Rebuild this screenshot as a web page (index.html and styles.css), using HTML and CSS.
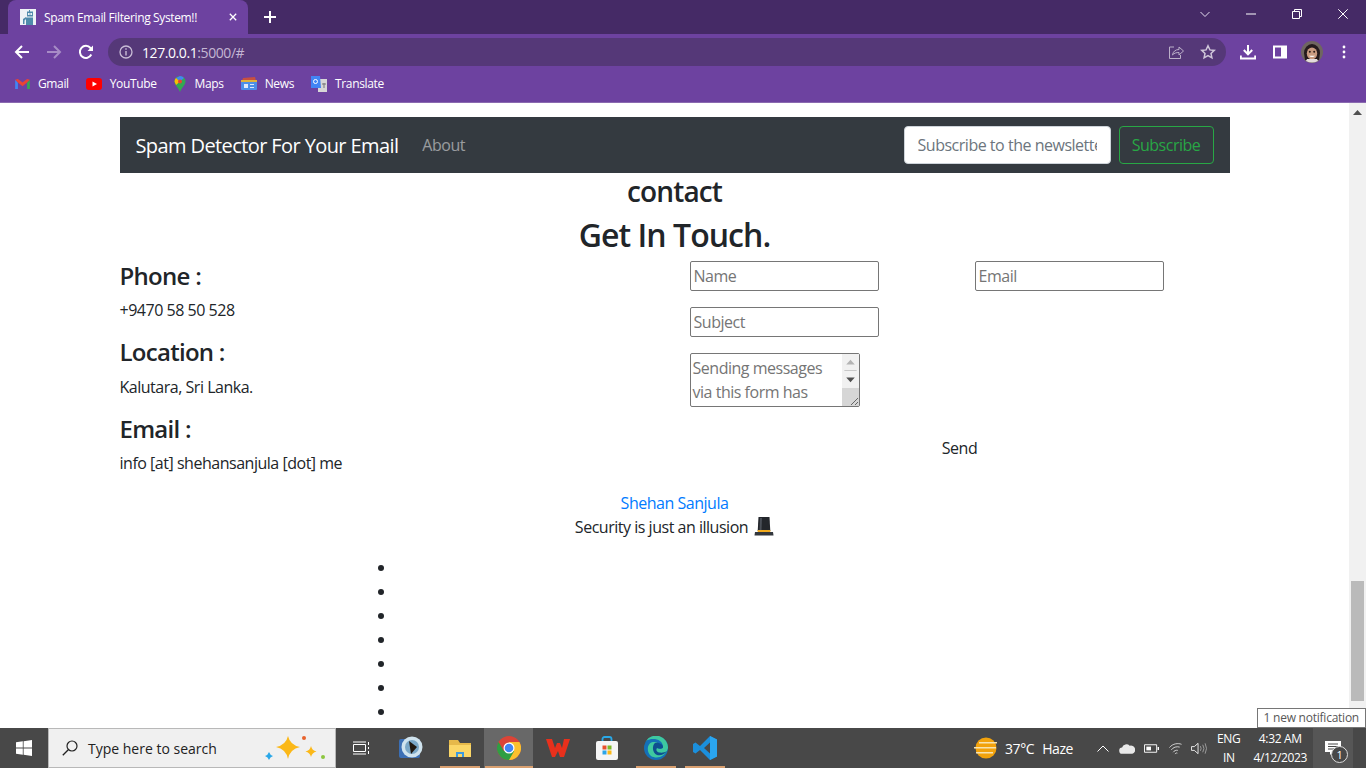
FILE: index.html
```html
<!DOCTYPE html>
<html>
<head>
    <title>Spam Email Filtering System!!</title>
    <link rel="stylesheet" href="styles.css">
</head>
<body>
<div class="screen">

    <div class="browser">
        <div class="tabstrip">
            <div class="tab">
                <svg class="favicon" viewBox="0 0 16 16"><rect width="16" height="16" fill="#eef3f6"/><path d="M7 2.500h6v5H7zM6 8.500h7V16H6zM3 10l3-2v2l-1.500 1.500V15H3zM9 1h1v2H9z" fill="#4f8bab"/><circle cx="8.800" cy="5" r="1" fill="#fff"/><circle cx="11.200" cy="5" r="1" fill="#fff"/></svg>
                <span class="tab-title">Spam Email Filtering System!!</span>
                <svg class="tab-close" viewBox="0 0 10 10"><path d="M1 1l8 8M9 1l-8 8" stroke="#fff" stroke-width="1.600"/></svg>
            </div>
            <svg class="new-tab" viewBox="0 0 12 12"><path d="M6 0v12M0 6h12" stroke="#fff" stroke-width="2"/></svg>
            <div class="window-btns">
                <svg viewBox="0 0 10 10" class="win-btn"><path d="M.5 3l4.500 4.500L9.500 3" fill="none" stroke="#e4dcee" stroke-width="1"/></svg>
                <svg viewBox="0 0 10 10" class="win-btn"><path d="M0 5h10" stroke="#fff" stroke-width="1"/></svg>
                <svg viewBox="0 0 10 10" class="win-btn"><path d="M2.500 2V.5h7v7H8M.5 2.500h7v7h-7z" fill="none" stroke="#fff" stroke-width="1"/></svg>
                <svg viewBox="0 0 10 10" class="win-btn"><path d="M.3 .3l9.400 9.400M9.700 .3L.3 9.700" stroke="#fff" stroke-width="1"/></svg>
            </div>
        </div>
        <div class="toolbar">
            <svg class="nav-icon" viewBox="0 0 16 16"><path d="M15 8H2M8 2L2 8l6 6" fill="none" stroke="#fff" stroke-width="2"/></svg>
            <svg class="nav-icon" viewBox="0 0 16 16"><path d="M1 8h13M8 2l6 6-6 6" fill="none" stroke="#a78cc6" stroke-width="2"/></svg>
            <svg class="nav-icon" viewBox="0 0 16 16"><path d="M13.300 10.500A6 6 0 1 1 12.500 4L14 5.500" fill="none" stroke="#fff" stroke-width="2"/><path d="M15 1.500V7H9.500z" fill="#fff"/></svg>
            <div class="omnibox">
                <svg class="info-icon" viewBox="0 0 14 14"><circle cx="7" cy="7" r="6" fill="none" stroke="#c9bdd6" stroke-width="1.300"/><path d="M7 6v4.500M7 3.300v1.500" stroke="#c9bdd6" stroke-width="1.400"/></svg>
                <span class="url">127.0.0.1<span class="url-rest">:5000/#</span></span>
                <svg class="share-icon" viewBox="0 0 16 16"><path d="M6 3H1.500v11.500h11V11" fill="none" stroke="#bcb0c9" stroke-width="1"/><path d="M4.500 11c.5-3.500 3-5.500 6.500-5.500V3l4.500 4-4.500 4V8.500c-2.500 0-5 .5-6.500 2.500z" fill="none" stroke="#bcb0c9" stroke-width="1"/></svg>
                <svg class="star-icon" viewBox="0 0 16 16"><path d="M8 1.800l1.900 4.100 4.400.5-3.300 3 .9 4.400L8 11.600l-3.900 2.200.9-4.400-3.300-3 4.400-.5z" fill="none" stroke="#cfc6d9" stroke-width="1.500"/></svg>
            </div>
            <svg class="download-icon" viewBox="0 0 16 16"><path d="M8 1v9M3.800 6L8 10.300 12.200 6M.8 11.500v3h14.400v-3" fill="none" stroke="#fff" stroke-width="2"/></svg>
            <svg class="panel-icon" viewBox="0 0 14 14"><path d="M0 .5h14v13H0z" fill="#fff"/><path d="M2 2.500h6v9H2z" fill="#6d42a0"/></svg>
            <svg class="avatar" viewBox="0 0 22 22"><circle cx="11" cy="11" r="11" fill="#6f6660"/><path d="M3 12a8 9 0 0 1 16 0l-1 7H4z" fill="#241a1d"/><ellipse cx="11" cy="12.500" rx="5.200" ry="6" fill="#c99b80"/><path d="M5 20q6 3 12 0l-1-2H6z" fill="#e4dcdc"/><path d="M7.800 14.800q3.200 2.600 6.400 0z" fill="#fff"/><circle cx="8.800" cy="10.800" r="1" fill="#2a1c18"/><circle cx="13.200" cy="10.800" r="1" fill="#2a1c18"/></svg>
            <svg class="dots" viewBox="0 0 4 14"><circle cx="2" cy="2" r="1.400" fill="#fff"/><circle cx="2" cy="7" r="1.400" fill="#fff"/><circle cx="2" cy="12" r="1.400" fill="#fff"/></svg>
        </div>
        <div class="bookmarks">
            <div class="bookmark">
                <svg viewBox="0 0 16 12" class="bm-gmail"><path d="M0 2v10h3V5z" fill="#4285f4"/><path d="M16 2v10h-3V5z" fill="#34a853"/><path d="M0 2l3-1 5 4 5-4 3 1-3 3-5 4-5-4z" fill="#ea4335"/></svg>
                <span>Gmail</span>
            </div>
            <div class="bookmark">
                <svg viewBox="0 0 16 12" class="bm-yt"><rect width="16" height="12" rx="3" fill="#f00"/><path d="M6.500 3.500L11 6 6.500 8.500z" fill="#fff"/></svg>
                <span>YouTube</span>
            </div>
            <div class="bookmark">
                <svg viewBox="0 0 12 16" class="bm-maps"><path d="M6 0a5.500 5.500 0 0 1 5.500 5.500C11.500 9 8 11 6 16 4 11 .5 9 .5 5.500A5.500 5.500 0 0 1 6 0z" fill="#34a853"/><path d="M2 2L6 0a5.500 5.500 0 0 1 4 2L6 5.500z" fill="#4285f4"/><path d="M.5 5.500A5.500 5.500 0 0 1 2 2l4 3.500L2 9z" fill="#fbbc04"/><circle cx="6" cy="5.500" r="2" fill="#ea4335"/></svg>
                <span>Maps</span>
            </div>
            <div class="bookmark">
                <svg viewBox="0 0 16 14" class="bm-news"><path d="M2 1l12-1 1 4H1z" fill="#c9503f"/><rect y="3" width="16" height="10" rx="1" fill="#4d8fe8"/><path d="M0 3h16v2H0z" fill="#e2b33a"/><path d="M3 7h4v4H3zM9 7h4v1H9zM9 10h4v1H9z" fill="#dfeaf8"/></svg>
                <span>News</span>
            </div>
            <div class="bookmark">
                <svg viewBox="0 0 16 16" class="bm-translate"><path d="M7 3h9v13H7z" fill="#d7d7d7"/><path d="M0 0h9l1 12H0z" fill="#4285f4"/><circle cx="4.500" cy="5.500" r="2" fill="none" stroke="#fff" stroke-width="1"/><path d="M11 8h4M13 7v5" stroke="#777" stroke-width="1"/></svg>
                <span>Translate</span>
            </div>
        </div>
    </div>

    <div class="viewport">
        <div class="page">
            <div class="container">
                <nav class="navbar">
                    <a class="brand">Spam Detector For Your Email</a>
                    <a class="nav-link">About</a>
                    <form class="subscribe">
                        <input class="subscribe-input" type="text" placeholder="Subscribe to the newsletter">
                        <button class="subscribe-btn" type="button">Subscribe</button>
                    </form>
                </nav>

                <h2 class="contact-title">contact</h2>
                <h1 class="contact-head">Get In Touch.</h1>

                <div class="contact-row">
                    <div class="contact-info">
                        <h3>Phone :</h3>
                        <p>+9470 58 50 528</p>
                        <h3>Location :</h3>
                        <p>Kalutara, Sri Lanka.</p>
                        <h3>Email :</h3>
                        <p>info [at] shehansanjula [dot] me</p>
                    </div>
                    <form class="contact-form">
                        <div class="form-grid">
                            <input type="text" placeholder="Name">
                            <input type="text" placeholder="Email">
                            <input type="text" placeholder="Subject">
                        </div>
                        <div class="message-box">
                            <textarea placeholder="Sending messages via this form has been disabled"></textarea>
                            <div class="message-scroll">
                                <svg viewBox="0 0 17 18" class="message-btn"><path d="M8.500 6L13 11H4z" fill="#b4b4b4"/><path d="M2 17.500h13" stroke="#c4c4c4" stroke-width="1"/></svg>
                                <svg viewBox="0 0 17 18" class="message-btn"><path d="M8.500 12L13 7H4z" fill="#505050"/></svg>
                                <div class="message-thumb">
                                    <svg viewBox="0 0 10 10" class="message-grip"><path d="M9 2L2 9M9 6L6 9" stroke="#666" stroke-width="1"/></svg>
                                </div>
                            </div>
                        </div>
                        <button class="send-btn" type="button">Send</button>
                    </form>
                </div>

                <footer class="credits">
                    <a class="credit-link">Shehan Sanjula</a>
                    <div class="credit-line">Security is just an illusion
                        <svg class="hat" viewBox="0 0 20 20"><path d="M4.500 0h11l.8 14H3.700z" fill="#23262b"/><path d="M6 1h2l-.5 12H5.500z" fill="#4a4f57"/><path d="M3.700 13h12.600v2H3.700z" fill="#f2aa1c"/><path d="M1 15h18l.5 3.500H.5z" fill="#33373d"/></svg>
                    </div>
                </footer>

                <ul class="empty-list">
                    <li></li><li></li><li></li><li></li><li></li><li></li><li></li><li></li>
                </ul>
            </div>
        </div>
        <div class="scrollbar">
            <svg class="sb-arrow" viewBox="0 0 9 5"><path d="M4.500 0L9 5H0z" fill="#505050"/></svg>
            <div class="sb-thumb"></div>
        </div>
    </div>

    <div class="taskbar">
        <div class="start">
            <svg viewBox="0 0 16 16" class="win-logo"><path d="M0 2.300l6.800-1v6.300H0zM7.600 1.200L16 0v7.600H7.600zM0 8.400h6.800v6.300l-6.800-1zM7.600 8.400H16V16l-8.400-1.200z" fill="#fff"/></svg>
        </div>
        <div class="search">
            <svg class="search-icon" viewBox="0 0 16 16"><circle cx="10" cy="6" r="5" fill="none" stroke="#222" stroke-width="1.200"/><path d="M6.300 9.700L.8 15.200" stroke="#222" stroke-width="1.300"/></svg>
            <span class="search-text">Type here to search</span>
            <svg class="sparkles" viewBox="0 0 62 28"><path d="M25 2q2 9 12 11-10 2-12 12-2-10-12-12 10-2 12-11z" fill="#fbb818"/><path d="M48 12q1 4.500 5.500 5.500-4.500 1-5.500 5.500-1-4.500-5.500-5.500 4.500-1 5.500-5.500z" fill="#fbb818"/><path d="M6 18q1 3 4 4-3 1-4 4-1-3-4-4 3-1 4-4z" fill="#29a7e8"/><circle cx="41" cy="4" r="2" fill="#e8622c"/><circle cx="60" cy="23" r="2" fill="#8cc63f"/></svg>
        </div>
        <div class="task task-first">
            <svg viewBox="0 0 17 14" class="taskview-icon"><path d="M.5 3.500h12v7H.5zM0 1h13M0 13h13M15.500 1v3M15.500 6v2M15.500 10v3" fill="none" stroke="#fff" stroke-width="1"/></svg>
        </div>
        <div class="task">
            <svg viewBox="0 0 24 24" class="task-icon"><rect y="3" width="21" height="19" rx="2" fill="#3b6fb5"/><circle cx="13" cy="11" r="10.500" fill="#cfe3ee"/><circle cx="13" cy="11" r="7" fill="#7aa7c7"/><path d="M10 5l8 6-6 7z" fill="#201810"/></svg>
        </div>
        <div class="task task-running">
            <svg viewBox="0 0 24 20" class="task-icon"><path d="M1 2h9l2 3h11v14H1z" fill="#e6b94a"/><path d="M1 7h22v12H1z" fill="#fbd767"/><path d="M8 14h8v5h-2v-3h-4v3H8z" fill="#3c9be0"/></svg>
        </div>
        <div class="task task-active">
            <svg viewBox="0 0 24 24" class="task-icon"><circle cx="12" cy="12" r="12" fill="#db4437"/><path d="M12 24A12 12 0 0 0 22.400 6H12z" fill="#fbc02d"/><path d="M1.600 6A12 12 0 0 0 12 24l5.200-9H6.800z" fill="#2f9e44"/><circle cx="12" cy="12" r="5.500" fill="#fff"/><circle cx="12" cy="12" r="4.300" fill="#4285f4"/></svg>
        </div>
        <div class="task">
            <svg viewBox="0 0 24 20" class="task-icon"><path d="M0 1h6l3 9 2-5h3l2 5 2-9h6l-6 18h-4l-2-6-3 6H6z" fill="#e8301c"/></svg>
        </div>
        <div class="task">
            <svg viewBox="0 0 24 24" class="task-icon"><path d="M7.500 6V3a2 2 0 0 1 2-2h5a2 2 0 0 1 2 2v3" fill="none" stroke="#29a9e8" stroke-width="1.800"/><rect x="1" y="5" width="22" height="19" rx="2" fill="#f5f5f5"/><path d="M7.500 9.500h4v4h-4z" fill="#e8502c"/><path d="M12.500 9.500h4v4h-4z" fill="#7db928"/><path d="M7.500 14.500h4v4h-4z" fill="#2ca5e8"/><path d="M12.500 14.500h4v4h-4z" fill="#fbb818"/></svg>
        </div>
        <div class="task task-running">
            <svg viewBox="0 0 24 24" class="task-icon"><circle cx="12" cy="12" r="12" fill="#1470b8"/><path d="M24 12A12 12 0 0 0 2 5c6-4 17-2 17 6 0 2-4 2-6 1 0 0 4-7-4-6-6 1-7 10-2 14 5 3 14 2 17-8z" fill="#3ec9a0"/><path d="M13 12c3 1 6 1 6-1 0-3-5-5-8-4-3 2-3 10 2 12 3 1 7 0 10-4-4 3-13 2-10-3z" fill="#0e4f8f"/></svg>
        </div>
        <div class="task task-running">
            <svg viewBox="0 0 24 24" class="task-icon"><path d="M17 0l7 3.500v17L17 24 7 14l-4.500 3.500L0 16V8l2.500-1.500L7 10zM17 6.500L11 12l6 5.500z" fill="#1b8fdc"/><path d="M17 0l7 3.500v17L17 24z" fill="#2aa5ef"/></svg>
        </div>

        <div class="tray">
            <div class="weather">
                <svg viewBox="0 0 26 22" class="weather-icon"><circle cx="13" cy="11" r="10.500" fill="#f2a20c"/><path d="M6 5h18v1.500H6zM1 10h22v1.500H1zM3 15h17v1.500H3z" fill="#f7e3b0"/></svg>
                <span class="temp">37°C</span>
                <span>Haze</span>
            </div>
            <div class="tray-icons">
                <svg viewBox="0 0 12 7" class="tray-chevron"><path d="M.5 6.500L6 1l5.500 5.500" fill="none" stroke="#fff" stroke-width="1"/></svg>
                <svg viewBox="0 0 18 12" class="tray-cloud"><path d="M4 12a3.500 3.500 0 0 1-.5-7A5 5 0 0 1 12 3a4 4 0 0 1 3 9z" fill="#e8e8e8"/></svg>
                <svg viewBox="0 0 16 9" class="tray-battery"><path d="M.5 .5h13v8H.5z" fill="none" stroke="#fff"/><path d="M2.500 2.500h5v4h-5z" fill="#fff"/><path d="M14.500 3h1.500v3h-1.500z" fill="#fff"/></svg>
                <svg viewBox="0 0 14 13" class="tray-wifi"><path d="M.5 5.500C4 1 10 .5 13.500 2M2.500 8c2-3 6-4 9-3M4.500 10.500c1-1.500 3-2.500 5-2M6.500 12.500c.5-1 1.500-1.500 2.500-1" fill="none" stroke="#e8e8e8" stroke-width=".9"/></svg>
                <svg viewBox="0 0 17 13" class="tray-sound"><path d="M.5 4.500h3l4-3.500v11l-4-3.500h-3z" fill="none" stroke="#fff" stroke-width=".9"/><path d="M10 4q1.500 2.500 0 5M12.500 2.500q2.500 4 0 8M15 1q3 5.500 0 11" fill="none" stroke="#aaa" stroke-width=".9"/></svg>
            </div>
            <div class="lang">ENG<br>IN</div>
            <div class="clock">4:32 AM<br>4/12/2023</div>
            <div class="notify">
                <svg viewBox="0 0 17 14" class="notify-icon"><path d="M0 0h16v11H8l-3 3v-3H0z" fill="#fff"/><path d="M3 3h10M3 5.500h10M3 8h10" stroke="#484848" stroke-width="1"/></svg>
                <span class="notify-count">1</span>
            </div>
        </div>
    </div>

    <div class="tooltip">1 new notification</div>
</div>
</body>
</html>
```

FILE: styles.css
```css
html, body {
    margin: 0;
    padding: 0;
    height: 100%;
    overflow: hidden;
}

* {
    letter-spacing: -0.03em;
}

body {
    font-family: "Open Sans", "Noto Sans", Arial, sans-serif;
    font-size: 16px;
    color: #212529;
    background-color: #fff;
}

svg {
    display: block;
    flex-shrink: 0;
}

.screen {
    position: relative;
    display: flex;
    flex-direction: column;
    height: 768px;
}

/* browser chrome */
.browser {
    flex: 0 0 103px;
    background-color: #6d42a0;
    border-bottom: 1px solid #8a6ab0;
    box-sizing: border-box;
    color: #fff;
}

.tabstrip {
    display: flex;
    align-items: center;
    height: 34px;
    background-color: #452a66;
    padding-left: 8px;
}

.tab {
    display: flex;
    align-items: center;
    width: 240px;
    height: 34px;
    box-sizing: border-box;
    padding: 0 11px 0 12px;
    background-color: #6d42a0;
    border-radius: 8px 8px 0 0;
    font-size: 12px;
}

.favicon {
    width: 16px;
    height: 16px;
}

.tab-title {
    margin-left: 8px;
    flex: 1;
    white-space: nowrap;
}

.tab-close {
    width: 8px;
    height: 8px;
}

.new-tab {
    width: 12px;
    height: 12px;
    margin-left: 16px;
}

.window-btns {
    display: flex;
    align-self: flex-start;
    gap: 36px;
    margin-left: auto;
    padding: 9px 18px 0 0;
}

.win-btn {
    width: 10px;
    height: 10px;
}

.toolbar {
    display: flex;
    align-items: center;
    height: 36px;
    padding-left: 14px;
}

.nav-icon {
    width: 16px;
    height: 16px;
    margin-right: 16px;
}

.omnibox {
    display: flex;
    align-items: center;
    width: 1118px;
    height: 28px;
    margin-left: -2px;
    padding: 0 10px 0 11px;
    box-sizing: border-box;
    background-color: #553878;
    border-radius: 14px;
    font-size: 14px;
}

.info-icon {
    width: 14px;
    height: 14px;
    margin-right: 9px;
}

.url {
    flex: 1;
}

.url-rest {
    color: #c4b6d3;
}

.share-icon {
    width: 16px;
    height: 16px;
    margin-right: 16px;
}

.star-icon {
    width: 16px;
    height: 16px;
}

.download-icon {
    width: 16px;
    height: 16px;
    margin-left: 14px;
}

.panel-icon {
    width: 14px;
    height: 14px;
    margin-left: 17px;
}

.avatar {
    width: 22px;
    height: 22px;
    margin-left: 14px;
}

.dots {
    width: 4px;
    height: 14px;
    margin-left: 19px;
}

.bookmarks {
    display: flex;
    align-items: center;
    height: 27px;
    padding-left: 15px;
    font-size: 12px;
}

.bookmark {
    display: flex;
    align-items: center;
    margin-right: 17px;
}

.bookmark svg {
    margin-right: 8px;
}

.bm-gmail { width: 15px; height: 11px; }
.bm-yt { width: 16px; height: 12px; }
.bm-maps { width: 12px; height: 16px; }
.bm-news { width: 16px; height: 14px; }
.bm-translate { width: 16px; height: 16px; }

.bookmark svg.bm-maps {
    margin-right: 9px;
}

/* page */
.viewport {
    flex: 1;
    display: flex;
    min-height: 0;
}

.page {
    flex: 1;
    overflow: hidden;
    padding-top: 14px;
}

.container {
    width: 1110px;
    margin: 0 auto;
}

.navbar {
    display: flex;
    align-items: center;
    height: 56px;
    padding: 0 16px;
    background-color: #343a40;
}

.brand {
    font-size: 20px;
    color: #fff;
    margin-right: 24px;
}

.nav-link {
    color: rgba(255, 255, 255, .5);
}

.subscribe {
    display: flex;
    margin-left: auto;
}

.subscribe-input {
    width: 207px;
    height: 38px;
    box-sizing: border-box;
    padding: 6px 13px;
    border: 1px solid #ced4da;
    border-radius: 4px;
    font: inherit;
    margin-right: 8px;
}

.subscribe-input::placeholder {
    color: #6c757d;
}

.subscribe-btn {
    width: 95px;
    height: 38px;
    box-sizing: border-box;
    padding: 0;
    border: 1px solid #28a745;
    border-radius: 4px;
    background: transparent;
    color: #28a745;
    font: inherit;
}

.contact-title {
    margin: 0;
    text-align: center;
    font-size: 28px;
    font-weight: 600;
    line-height: 36px;
}

.contact-head {
    margin: 0;
    text-align: center;
    font-size: 32px;
    font-weight: 600;
    line-height: 52px;
}

.contact-row {
    display: flex;
}

.contact-info {
    width: 570px;
}

.contact-info h3 {
    margin: 0 0 8px;
    font-size: 24px;
    font-weight: 600;
    line-height: 28.800px;
}

.contact-info h3:first-child {
    margin-top: 1px;
    margin-bottom: 7px;
}

.contact-info p {
    margin: 0 0 16px;
    line-height: 24px;
}

.contact-form {
    flex: 1;
}

.form-grid {
    display: grid;
    grid-template-columns: 285px 255px;
    row-gap: 16px;
}

.form-grid input {
    width: 189px;
    height: 30px;
    box-sizing: border-box;
    padding: 1px 3px;
    border: 1px solid #767676;
    border-radius: 2px;
    font: inherit;
}

.message-box {
    position: relative;
    width: 170px;
    height: 54px;
    margin-top: 16px;
}

.message-box textarea {
    display: block;
    width: 100%;
    height: 100%;
    box-sizing: border-box;
    padding: 2px 18px 2px 2px;
    border: 1px solid #767676;
    border-radius: 2px;
    font: inherit;
    line-height: 24px;
    overflow: hidden;
    resize: none;
}

.message-scroll {
    position: absolute;
    top: 1px;
    right: 1px;
    bottom: 1px;
    width: 17px;
    display: flex;
    flex-direction: column;
    background-color: #f1f1f1;
}

.message-btn {
    width: 17px;
    height: 17px;
}

.message-thumb {
    position: relative;
    flex: 1;
    background-color: #d6d6d6;
}

.message-grip {
    position: absolute;
    right: 0;
    bottom: 0;
    width: 10px;
    height: 10px;
}

.contact-form input::placeholder,
.contact-form textarea::placeholder {
    color: #757575;
}

.send-btn {
    display: block;
    margin: 29px auto 0;
    padding: 0;
    border: none;
    background: transparent;
    color: #212529;
    font: inherit;
    line-height: 24px;
}

.credits {
    text-align: center;
    line-height: 24px;
}

.credit-link {
    color: #007bff;
}

.credit-line {
    display: flex;
    justify-content: center;
    align-items: center;
    gap: 6px;
}

.hat {
    width: 20px;
    height: 20px;
}

.empty-list {
    margin: 16px 0 0 276px;
    padding-left: 0;
    line-height: 24px;
}

.empty-list li {
    height: 24px;
}

/* scrollbar */
.scrollbar {
    flex: 0 0 17px;
    position: relative;
    display: flex;
    justify-content: center;
    background-color: #f1f1f1;
    padding-top: 7px;
    box-sizing: border-box;
}

.sb-arrow {
    width: 9px;
    height: 5px;
}

.sb-thumb {
    position: absolute;
    left: 2px;
    right: 2px;
    top: 478px;
    height: 120px;
    background-color: #bababa;
}

/* taskbar */
.taskbar {
    flex: 0 0 40px;
    display: flex;
    align-items: stretch;
    background-color: #484848;
    color: #fff;
    font-size: 12px;
}

.start {
    display: flex;
    align-items: center;
    justify-content: center;
    width: 48px;
}

.win-logo {
    width: 16px;
    height: 16px;
}

.search {
    display: flex;
    align-items: center;
    width: 288px;
    box-sizing: border-box;
    padding: 0 10px 0 13px;
    background-color: #f0f0f0;
    border: 1px solid #b8b8b8;
    color: #222;
    font-size: 14px;
}

.search-text {
    letter-spacing: 0;
}

.search-icon {
    width: 16px;
    height: 16px;
    margin-right: 10px;
}

.sparkles {
    width: 62px;
    height: 28px;
    margin-left: auto;
}

.task {
    display: flex;
    align-items: center;
    justify-content: center;
    width: 49px;
    position: relative;
}

.task-first {
    margin-left: 1px;
}

.task-icon {
    width: 24px;
    height: 24px;
}

.taskview-icon {
    width: 17px;
    height: 14px;
}

.task-active {
    background-color: #686868;
}

.task-active::after,
.task-running::after {
    content: "";
    position: absolute;
    left: 5px;
    right: 4px;
    bottom: 0;
    height: 2px;
    background-color: #d9a070;
}

.task-active::after {
    left: 1px;
    right: 0;
}

.tray {
    display: flex;
    align-items: center;
    margin-left: auto;
    padding-right: 13px;
    font-size: 14px;
}

.weather {
    display: flex;
    align-items: center;
    margin-right: 24px;
}

.weather-icon {
    width: 26px;
    height: 22px;
    margin-right: 6px;
}

.temp {
    margin-right: 8px;
}

.tray-icons {
    display: flex;
    align-items: center;
    gap: 9.500px;
    margin-right: 10px;
}

.tray-chevron { width: 12px; height: 7px; }
.tray-cloud { width: 16px; height: 11px; }
.tray-battery { width: 15px; height: 9px; }
.tray-wifi { width: 13px; height: 13px; }
.tray-sound { width: 16px; height: 13px; }

.lang {
    text-align: center;
    font-size: 12px;
    line-height: 19px;
    margin-right: 13px;
}

.clock {
    text-align: center;
    font-size: 12px;
    line-height: 19px;
    margin-right: 6px;
}

.notify {
    position: relative;
    width: 40px;
    height: 40px;
    background-color: #565656;
    display: flex;
    align-items: center;
    justify-content: center;
}

.notify-icon {
    width: 17px;
    height: 14px;
}

.notify-count {
    position: absolute;
    right: 5px;
    bottom: 5px;
    width: 15px;
    height: 15px;
    border: 1px solid #ddd;
    border-radius: 50%;
    background-color: #484848;
    text-align: center;
    font-size: 11px;
    line-height: 15px;
}

.tooltip {
    position: absolute;
    right: 0;
    bottom: 40px;
    height: 20px;
    box-sizing: border-box;
    padding: 0 6px;
    background-color: #fff;
    border: 1px solid #767676;
    color: #575757;
    font-size: 12px;
    letter-spacing: -0.02em;
    line-height: 18px;
}
```
